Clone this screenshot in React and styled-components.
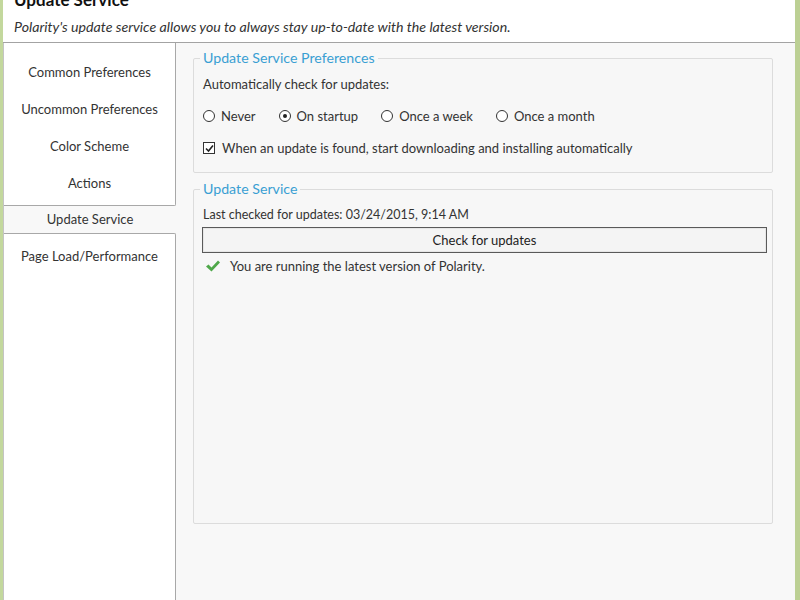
import React from 'react';
import styled, { createGlobalStyle } from 'styled-components';

const GlobalStyle = createGlobalStyle`
  html, body {
    margin: 0;
    padding: 0;
    background: #ffffff;
  }
  body {
    font-family: "Lato", "Liberation Sans", sans-serif;
    color: #333333;
  }
`;

const navItems = ["Common Preferences", "Uncommon Preferences", "Color Scheme", "Actions"];
const frequencies = [
    { label: "Never", checked: false },
    { label: "On startup", checked: true },
    { label: "Once a week", checked: false },
    { label: "Once a month", checked: false }
];

const Radio = ({label, checked}) => (
    <RadioOption>
        <RadioCircle checked={checked} />
        <span>{label}</span>
    </RadioOption>
);

const CheckMark = () => (
    <svg width="16" height="14" viewBox="0 0 16 14">
        <path d="M1 7.5 L3.5 5.5 L6.5 8.5 L13 1.5 L15 3.5 L6.5 12.5 Z" fill="#4fa84a" />
    </svg>
);

export default function App() {
    return (
        <>
            <GlobalStyle />
            <Window>
                <Header>
                    <Title>Update Service</Title>
                    <Subtitle>Polarity's update service allows you to always stay up-to-date with the latest version.</Subtitle>
                </Header>
                <Body>
                    <Nav>
                        <TabGroup>
                            {navItems.map(item => <TabItem key={item}>{item}</TabItem>)}
                        </TabGroup>
                        <SelectedTab>Update Service</SelectedTab>
                        <TabGroup grow>
                            <TabItem>Page Load/Performance</TabItem>
                        </TabGroup>
                    </Nav>
                    <Content>
                        <GroupBox>
                            <Legend>Update Service Preferences</Legend>
                            <GroupBody>
                                <Line>Automatically check for updates:</Line>
                                <RadioRow>
                                    {frequencies.map(f => <Radio key={f.label} label={f.label} checked={f.checked} />)}
                                </RadioRow>
                                <Line>
                                    <CheckBox>
                                        <svg width="9" height="9" viewBox="0 0 9 9">
                                            <path d="M1 4.5 L3.5 7 L8 1.5" fill="none" stroke="#222" strokeWidth="1.6" />
                                        </svg>
                                    </CheckBox>
                                    When an update is found, start downloading and installing automatically
                                </Line>
                            </GroupBody>
                        </GroupBox>
                        <GroupBox grow spaced>
                            <Legend>Update Service</Legend>
                            <GroupBody tight>
                                <Line small>Last checked for updates: 03/24/2015, 9:14 AM</Line>
                                <CheckButton>Check for updates</CheckButton>
                                <StatusLine>
                                    <CheckMark />
                                    You are running the latest version of Polarity.
                                </StatusLine>
                            </GroupBody>
                        </GroupBox>
                    </Content>
                </Body>
            </Window>
        </>
    );
}

const Window = styled.div`
  width: 800px;
  height: 600px;
  box-sizing: border-box;
  border-left: 3px solid #c3d89d;
  border-right: 5px solid #bcd094;
  display: flex;
  flex-direction: column;
  overflow: hidden;
  background: #ffffff;
`;

const Header = styled.div`
  height: 42px;
  flex-shrink: 0;
  padding-left: 11px;
  border-bottom: 1px solid #a3a3a3;
  overflow: hidden;
`;

const Title = styled.div`
  margin-top: -10px;
  font-size: 17px;
  line-height: 20px;
  font-weight: bold;
  color: #111111;
`;

const Subtitle = styled.div`
  margin-top: 8px;
  font-size: 14.2px;
  line-height: 18px;
  font-style: italic;
  color: #333333;
`;

const Body = styled.div`
  flex: 1;
  display: flex;
  min-height: 0;
`;

const Nav = styled.div`
  width: 173px;
  flex-shrink: 0;
  display: flex;
  flex-direction: column;
  border-left: 1px solid #c4c4c4;
  box-sizing: border-box;
`;

const TabGroup = styled.div`
  flex: ${({grow}) => grow ? 1 : "none"};
  padding: ${({grow}) => grow ? "4px 0 0" : "11px 0 3px"};
  border-right: 1px solid #a8a8a8;
  border-bottom: ${({grow}) => grow ? "none" : "1px solid #a8a8a8"};
  border-top: ${({grow}) => grow ? "1px solid #a8a8a8" : "none"};
  border-radius: ${({grow}) => grow ? "0 2px 0 0" : "0 0 2px 0"};
  background: #ffffff;
`;

const TabItem = styled.div`
  height: 37px;
  line-height: 37px;
  text-align: center;
  font-size: 13px;
  color: #333333;
`;

const SelectedTab = styled.div`
  height: 27px;
  line-height: 27px;
  text-align: center;
  font-size: 13px;
  color: #333333;
  background: #f8f8f8;
`;

const Content = styled.div`
  flex: 1;
  background: #f8f8f8;
  padding: 6px 22px 76px 17px;
  display: flex;
  flex-direction: column;
  min-width: 0;
`;

const GroupBox = styled.fieldset`
  margin: ${({spaced}) => spaced ? "7px 0 0" : "0"};
  padding: 0 5px 0 9px;
  border: 1px solid #dcdcdc;
  border-radius: 2px;
  flex: ${({grow}) => grow ? 1 : "none"};
  background: #f7f7f7;
  min-width: 0;
`;

const Legend = styled.legend`
  margin-left: -3px;
  padding: 0 3px;
  font-size: 14.2px;
  line-height: 18px;
  color: #3a9fd3;
`;

const GroupBody = styled.div`
  display: flex;
  flex-direction: column;
  gap: ${({tight}) => tight ? "3px" : "12px"};
  padding: ${({tight}) => tight ? "6px 0 0" : "7px 0 14px"};
`;

const Line = styled.div`
  height: 20px;
  display: flex;
  align-items: center;
  font-size: ${({small}) => small ? "12.5px" : "13px"};
  color: #333333;
`;

const RadioRow = styled.div`
  height: 20px;
  display: flex;
  align-items: center;
  gap: 23px;
  font-size: 13px;
  color: #333333;
`;

const RadioOption = styled.label`
  display: flex;
  align-items: center;
  gap: 6px;
`;

const RadioCircle = styled.span`
  width: 10px;
  height: 10px;
  border: 1px solid #333333;
  border-radius: 50%;
  display: flex;
  align-items: center;
  justify-content: center;
  background: #ffffff;
  &::after {
    content: "";
    width: 4px;
    height: 4px;
    border-radius: 50%;
    background: ${({checked}) => checked ? "#222222" : "transparent"};
  }
`;

const CheckBox = styled.span`
  width: 10px;
  height: 10px;
  border: 1px solid #333333;
  background: #ffffff;
  margin-right: 7px;
  display: flex;
  align-items: center;
  justify-content: center;
`;

const CheckButton = styled.div`
  margin-left: -1px;
  height: 24px;
  border: 1px solid #5a5a5a;
  box-shadow: inset 0 0 0 1px #e6e6e6;
  background: #f4f4f4;
  display: flex;
  align-items: center;
  justify-content: center;
  font-size: 13px;
  color: #222222;
`;

const StatusLine = styled(Line)`
  gap: 9px;
  padding-left: 2px;
`;
